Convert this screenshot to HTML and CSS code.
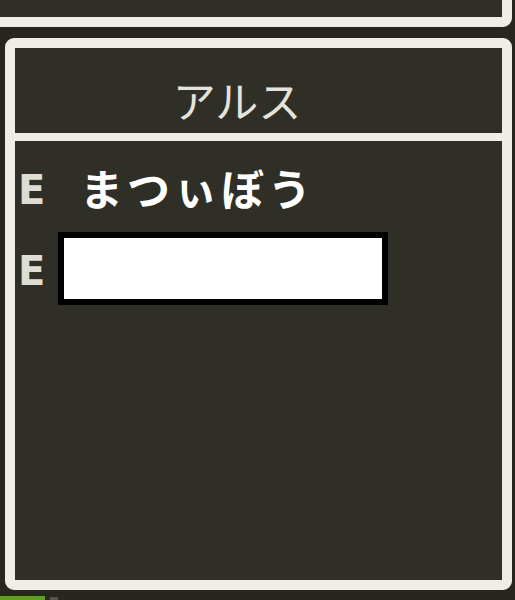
FILE: index.html
```html
<!DOCTYPE html>
<html lang="ja">
<head>
  <meta charset="UTF-8" />
  <meta name="viewport" content="width=device-width, initial-scale=1.0"/>
  <title>そうび</title>
  <link rel="stylesheet" href="styles.css">
</head>
<body>
  <!-- 上のウィンドウ（下端だけ見えている） -->
  <div class="ventana ventana-arriba"></div>

  <div class="ventana ventana-equipo">
    <div class="titulo"><span>アルス</span></div>
    <div class="lista">
      <div class="fila">
        <span class="marca">E</span>
        <span class="casilla">まつぃぼう</span>
      </div>
      <div class="fila">
        <span class="marca">E</span>
        <span class="casilla entrada"></span>
      </div>
    </div>
  </div>

  <div class="pie">
    <span class="barra"></span>
    <span class="punto"></span>
  </div>
</body>
</html>
```

FILE: styles.css
```css
* {
  box-sizing: border-box;
}

body {
  margin: 0;
  width: 515px;
  height: 600px;
  overflow: hidden;
  background: #27261f;
  font-family: "Noto Sans CJK JP", "DejaVu Sans", sans-serif;
}

.ventana {
  background: #302f27;
  border: 10px solid #eeeee6;
  border-radius: 9px;
}

.ventana-arriba {
  margin: -60px 3px 0 -20px;
  height: 87px;
}

.ventana-equipo {
  margin: 11px 3px 0 5px;
  height: 552px;
}

.titulo {
  height: 93px;
  padding-top: 30px;
  border-bottom: 8px solid #eeeee6;
  text-align: center;
  color: #e4e4dc;
  font-size: 43px;
  line-height: 43px;
}

.titulo span {
  margin-right: 43px;
  margin-left: -43px;
  padding-left: 43px;
}

.lista {
  display: flex;
  flex-direction: column;
  gap: 8px;
  padding: 10px 0 0 3px;
}

.fila {
  display: flex;
  align-items: center;
  height: 73px;
}

.marca {
  width: 40px;
  margin-top: 4px;
  font-family: "DejaVu Sans", sans-serif;
  font-weight: bold;
  font-size: 40px;
  line-height: 40px;
  color: #dedcd4;
}

.casilla {
  width: 330px;
  height: 73px;
  padding-left: 22px;
  color: #ffffff;
  font-size: 43px;
  font-weight: bold;
  line-height: 73px;
  letter-spacing: 4px;
}

.entrada {
  background: #ffffff;
  border: 6px solid #000000;
}

.pie {
  display: flex;
  align-items: center;
  gap: 5px;
  margin-top: 6px;
}

.barra {
  width: 45px;
  height: 5px;
  background: #5f9e22;
}

.punto {
  width: 8px;
  height: 4px;
  background: #55554c;
}
```
